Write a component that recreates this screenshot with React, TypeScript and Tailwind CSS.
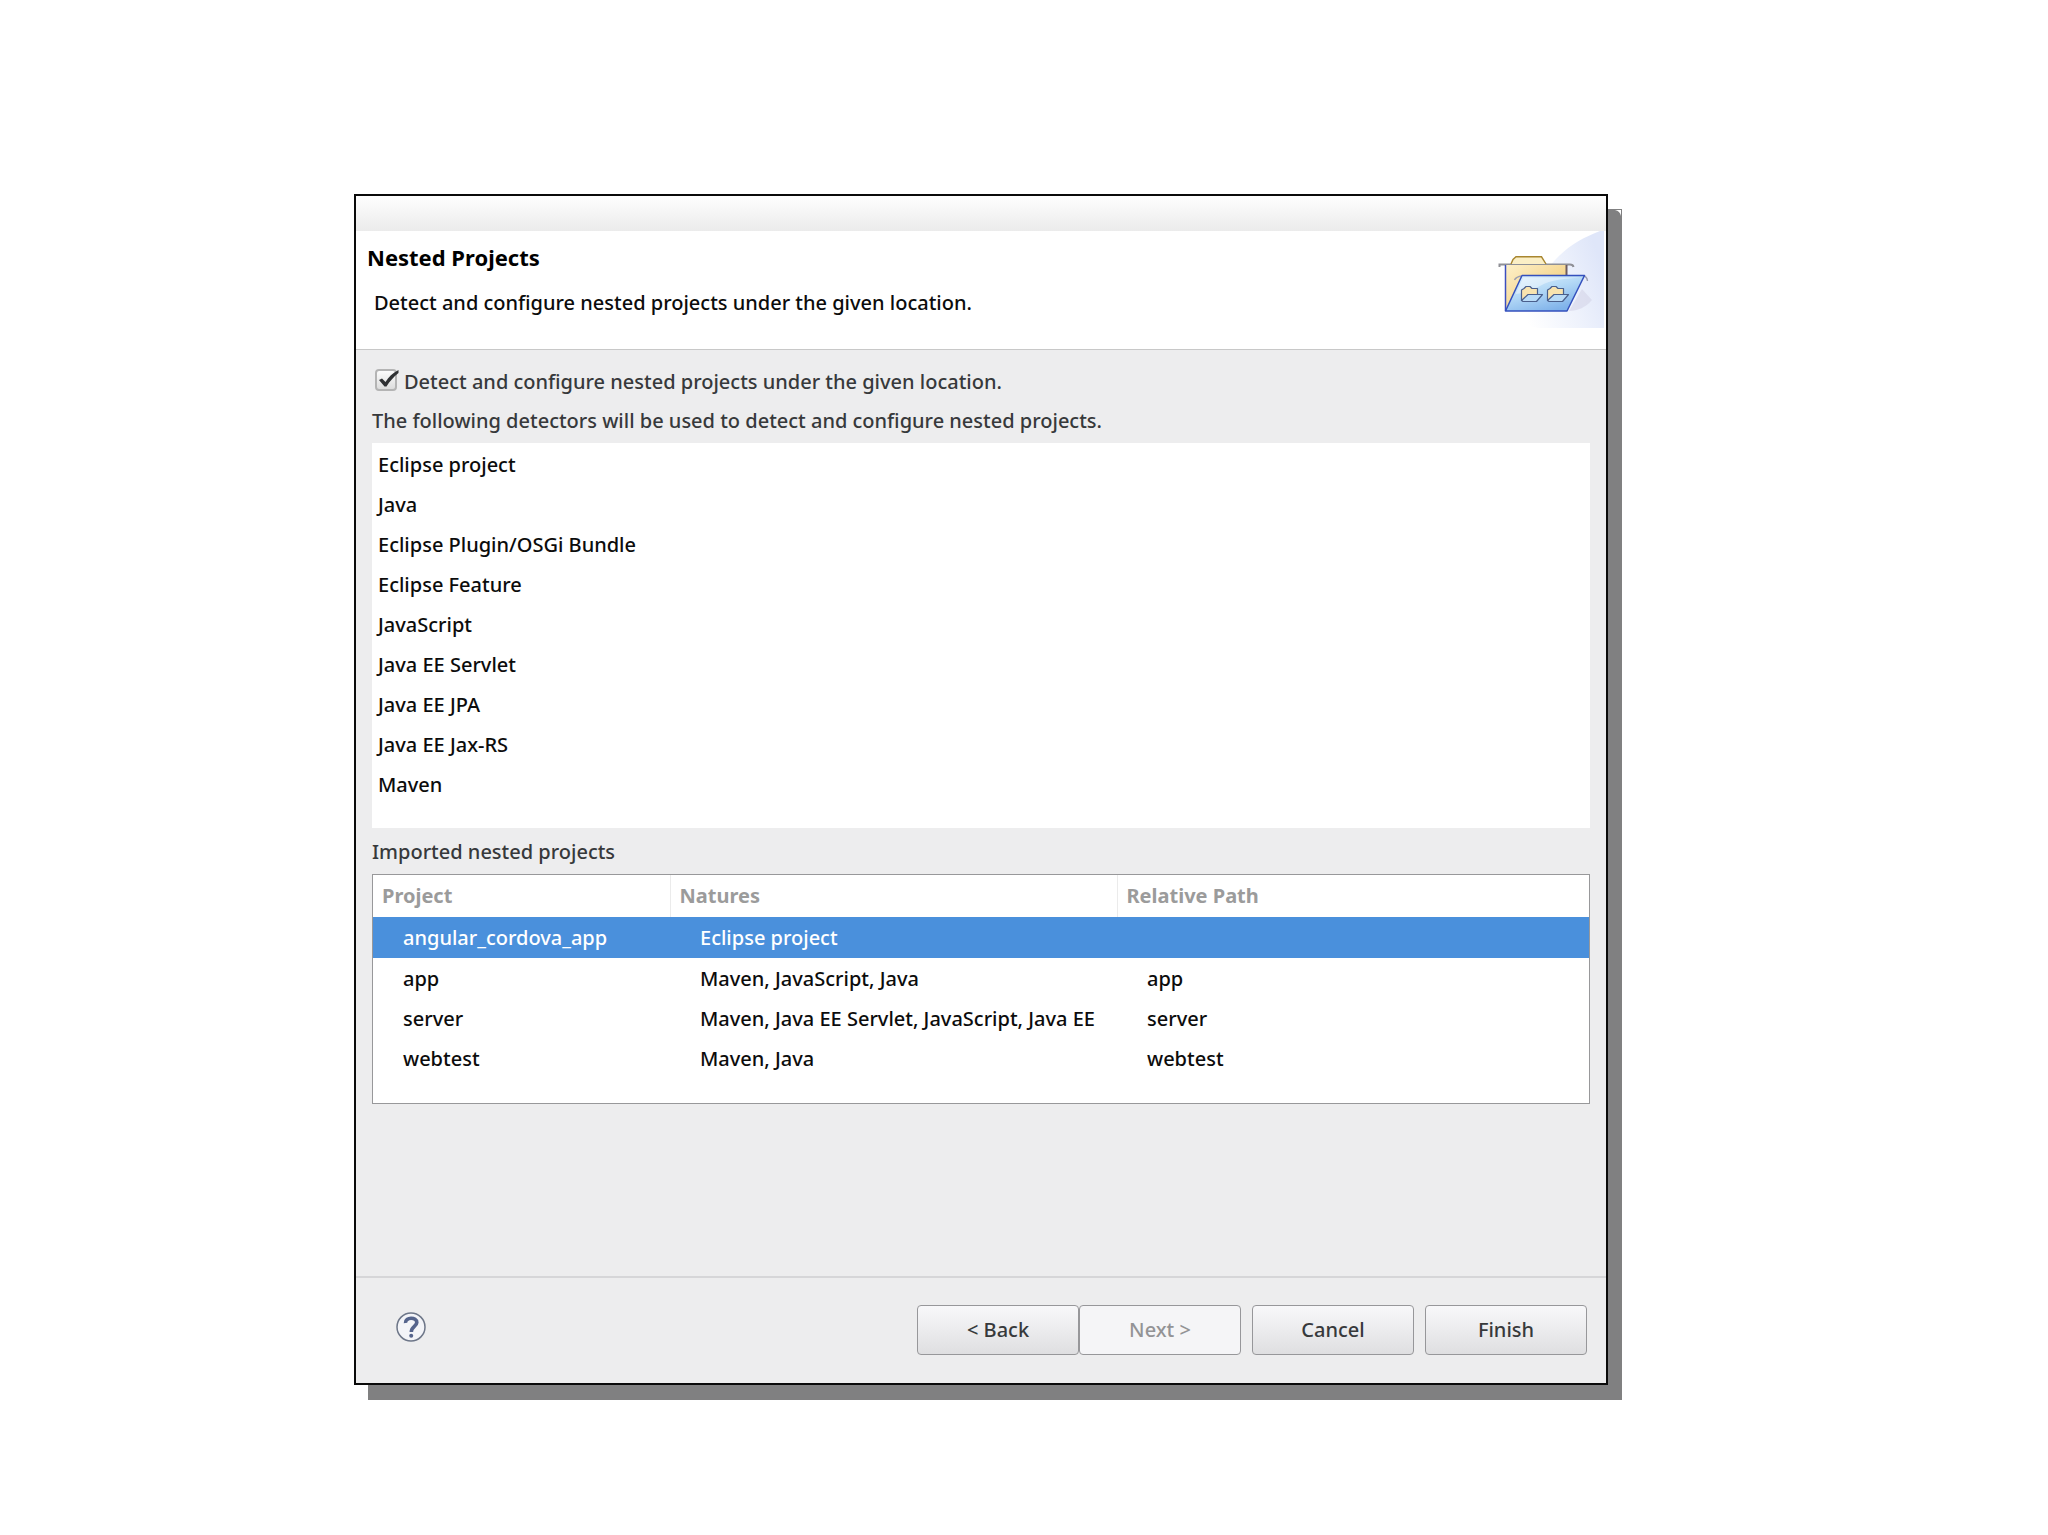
import React from 'react';
import clsx from 'clsx';

const detectors = [
  'Eclipse project',
  'Java',
  'Eclipse Plugin/OSGi Bundle',
  'Eclipse Feature',
  'JavaScript',
  'Java EE Servlet',
  'Java EE JPA',
  'Java EE Jax-RS',
  'Maven',
];

const projects = [
  { name: 'angular_cordova_app', natures: 'Eclipse project', path: '' },
  { name: 'app', natures: 'Maven, JavaScript, Java', path: 'app' },
  { name: 'server', natures: 'Maven, Java EE Servlet, JavaScript, Java EE', path: 'server' },
  { name: 'webtest', natures: 'Maven, Java', path: 'webtest' },
];

function SmallFolder({ x }: { x: number }) {
  return (
    <g transform={`translate(${x} 55)`} stroke="#4a5f8c" strokeWidth="1.2" strokeLinejoin="round">
      <path d="M0.5 14.5V4L3 2.5L5 0.5H9L11 2.5H16.5V8" fill="#f8e3ae" />
      <path d="M0.5 14.5L7 8.5H21.5L15.5 15.5H2Z" fill="#b9dbf7" />
    </g>
  );
}

function BannerIcon() {
  return (
    <svg className="mr-0.5 w-[108px] h-[98px] shrink-0" viewBox="0 0 108 98" aria-hidden="true">
      <defs>
        <linearGradient id="swoosh" x1="0" y1="0.8" x2="1" y2="0.4">
          <stop offset="0.1" stopColor="#ffffff" />
          <stop offset="0.6" stopColor="#eef2fc" />
          <stop offset="1" stopColor="#dfe6f9" />
        </linearGradient>
        <linearGradient id="back" x1="0" y1="0" x2="1" y2="1">
          <stop offset="0" stopColor="#fdf0c9" />
          <stop offset="1" stopColor="#f0c468" />
        </linearGradient>
        <linearGradient id="front" x1="0" y1="0" x2="0.6" y2="1">
          <stop offset="0" stopColor="#e2f2fd" />
          <stop offset="0.5" stopColor="#b4d9f6" />
          <stop offset="1" stopColor="#7fb2ea" />
        </linearGradient>
      </defs>
      <path d="M108 0H104C88 6 72 15 60 28C44 44 28 76 16 90L42 97H108Z" fill="url(#swoosh)" />
      <path d="M73 80L86 58L96 69C90 76 82 80 73 80Z" fill="#d3d3e8" opacity="0.6" />
      <path d="M3.500 36V33.500H74Q77 33.500 77.500 36" fill="none" stroke="#8f9096" strokeWidth="2" />
      <path d="M9.500 80V34H70.500V80Z" fill="url(#back)" />
      <path d="M9.500 80V34" stroke="#3c4fc0" strokeWidth="1.500" />
      <path d="M70.500 34V45" stroke="#6d5a5e" strokeWidth="2" />
      <path d="M15 33L17 28.500L20 25.800H45.500L50 33" fill="#fbefc6" stroke="#a8862f" strokeWidth="1.400" />
      <path d="M18.500 49Q20 46 25 45M88 45Q91 46 91.500 50" fill="none" stroke="#9a9db0" strokeWidth="1.400" />
      <path d="M9.500 80L26 44.500H88.500L71 80Z" fill="url(#front)" stroke="#3450bd" strokeWidth="1.500" strokeLinejoin="round" />
      <path d="M27.500 46.500H84C70 48 55 48 44 55C35 60 28 62 19.500 63Z" fill="#ffffff" opacity="0.4" />
      <SmallFolder x={25} />
      <SmallFolder x={51} />
    </svg>
  );
}

function WizardButton({ children, disabled, className }: { children: React.ReactNode; disabled?: boolean; className?: string }) {
  return (
    <button
      type="button"
      disabled={disabled}
      className={clsx(
        'w-[162px] h-[50px] rounded-[4px] border border-[#97979a]',
        disabled ? 'bg-[#f5f5f7] text-[#939395]' : 'bg-linear-to-b from-[#f8f8fa] to-[#dfdfe1] text-[#37393b]',
        className,
      )}
    >
      {children}
    </button>
  );
}

export default function App() {
  return (
    <div className="min-h-screen bg-white pt-[194px] pb-[150px] pl-[354px] pr-[440px] font-['Noto_Sans','Open_Sans',sans-serif] font-medium text-[20px] leading-[28px] text-[#0c0c0c]">
      <main className="relative border-2 border-[#0a0a0a] bg-[#ededee] shadow-[14px_15px_0_#808081]">
        {/* light nick in the corner of the shadow */}
        <svg className="absolute -right-[15px] top-[14px] w-[6px] h-[6px]" viewBox="0 0 6 6" aria-hidden="true">
          <path d="M0 0H6V6Q5 1 0 0Z" fill="#ffffff" />
        </svg>
        <div className="h-[35px] bg-linear-to-b from-[#fefefe] to-[#ebebeb]" />

        <header className="flex justify-between bg-white border-b border-[#c8c8c8]">
          <div className="pt-3 pl-[11px] pb-8">
            <h1 className="font-bold text-[22px] text-black">Nested Projects</h1>
            <p className="pt-[18px] pl-[7px]">Detect and configure nested projects under the given location.</p>
          </div>
          <BannerIcon />
        </header>

        <section className="px-4 pt-[18px] pb-[172px]">
          <label className="flex items-center gap-[7px] pl-[3px] text-[#37393b]">
            <span className="relative mb-1 w-[22px] h-[22px] shrink-0">
              <input
                type="checkbox"
                defaultChecked
                className="peer block appearance-none w-[22px] h-[22px] rounded-[4px] border-2 border-[#b4b4b4] bg-linear-to-b from-[#fcfcfc] to-[#dddddd]"
              />
              <svg className="hidden peer-checked:block absolute left-0 top-0 w-[24px] h-[22px] pointer-events-none" viewBox="0 0 24 22">
                <path d="M4 11L7 9.500L10.500 13C13.500 8 17.500 4 23.500 1V4C18.500 8 14.500 12.500 11.500 17.500H9.500Z" fill="#2f3133" />
              </svg>
            </span>
            Detect and configure nested projects under the given location.
          </label>
          <p className="pt-[11px] text-[#37393b]">The following detectors will be used to detect and configure nested projects.</p>

          <ul className="mt-2 bg-white pt-[2px] pb-[23px]">
            {detectors.map((d) => (
              <li key={d} className="h-10 pl-[6px] leading-[40px]">{d}</li>
            ))}
          </ul>

          <h2 className="pt-[10px] text-[#37393b]">Imported nested projects</h2>
          <div className="mt-2 border border-[#98989a] bg-white pb-6">
            <table className="w-full table-fixed text-left">
              <colgroup>
                <col className="w-[297px]" />
                <col className="w-[447px]" />
                <col />
              </colgroup>
              <thead>
                <tr className="h-[42px] text-[#9b9b9b]">
                  <th className="pl-[9px] font-bold border-r border-[#ebebeb]">Project</th>
                  <th className="pl-[9px] font-bold border-r border-[#ebebeb]">Natures</th>
                  <th className="pl-[9px] font-bold">Relative Path</th>
                </tr>
              </thead>
              <tbody>
                {projects.map((p, i) => (
                  <tr key={p.name} className={clsx(i < 2 ? 'h-[41px]' : 'h-10', i === 0 && 'bg-[#4a90dc] text-white')}>
                    <td className="pl-[30px]">{p.name}</td>
                    <td className="pl-[30px] whitespace-nowrap overflow-hidden">{p.natures}</td>
                    <td className="pl-[30px]">{p.path}</td>
                  </tr>
                ))}
              </tbody>
            </table>
          </div>
        </section>

        <footer className="flex items-center border-t-2 border-[#d6d6d8] pt-[27px] pb-[28px] pl-10 pr-[19px]">
          <button type="button" aria-label="Help" className="mb-[6px] w-[30px] h-[30px]">
            <svg viewBox="0 0 30 30" className="w-[30px] h-[30px]">
              <circle cx="15" cy="15" r="14" fill="#f3f4f8" stroke="#6d7688" strokeWidth="1.500" />
              <path d="M9.500 11C9 4.800 21 4.800 20.800 10.500C20.500 14.500 15.300 14.500 15.300 20" fill="none" stroke="#55648c" strokeWidth="3.600" />
              <circle cx="15.200" cy="23.800" r="2" fill="#55648c" />
            </svg>
          </button>
          <div className="ml-auto flex">
            <WizardButton>&lt; Back</WizardButton>
            <WizardButton disabled>Next &gt;</WizardButton>
            <WizardButton className="ml-[11px]">Cancel</WizardButton>
            <WizardButton className="ml-[11px]">Finish</WizardButton>
          </div>
        </footer>
      </main>
    </div>
  );
}
